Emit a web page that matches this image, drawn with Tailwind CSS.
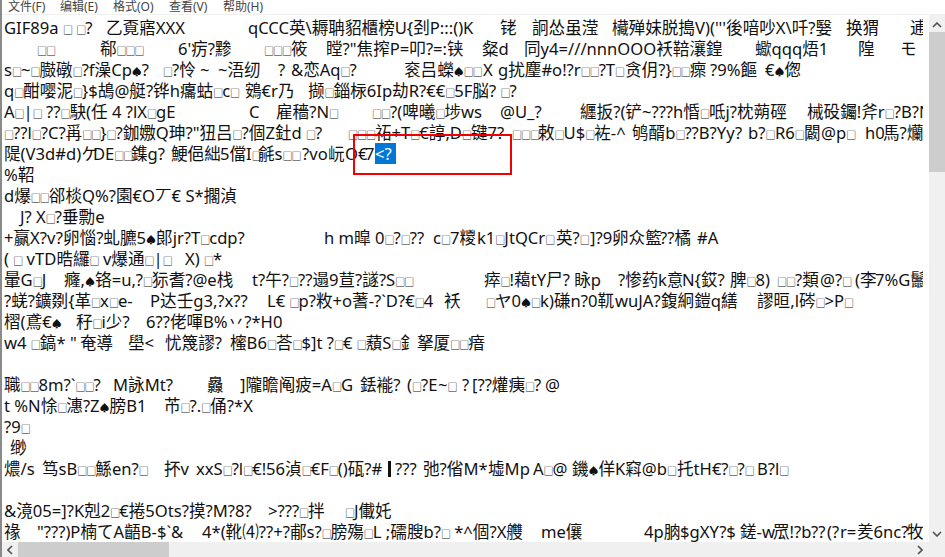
<!DOCTYPE html>
<html lang="zh-CN">
<head>
    <meta charset="UTF-8">
    <title>记事本</title>
    <script src="https://cdn.jsdelivr.net/npm/@tailwindcss/browser@4"></script>
</head>
<body class="w-[945px] h-[557px] overflow-hidden bg-white text-[#111] font-['Noto_Sans','Noto_Sans_CJK_SC',sans-serif]">
    <div class="relative flex flex-col h-full border-l-2 border-[#8a8a8a]">
        <!-- 菜单栏 -->
        <div class="flex h-[15px] overflow-hidden text-[12px] leading-[13px] text-[#444] border-b border-[#f0f0f0] shrink-0">
            <span class="w-[52px] pl-[6px] shrink-0">文件(F)</span>
            <span class="w-[53px] pl-[6px] shrink-0">编辑(E)</span>
            <span class="w-[56px] pl-[6px] shrink-0">格式(O)</span>
            <span class="w-[54px] pl-[6px] shrink-0">查看(V)</span>
            <span class="pl-[6px] shrink-0">帮助(H)</span>
        </div>

        <div class="flex flex-1 min-h-0">
            <!-- 文本区 -->
            <div id="text" class="relative flex flex-col w-[921px] pt-[2px] overflow-hidden text-[16.6px] leading-[21px] whitespace-pre pl-[2px]">
                <div class="flex h-[21px]"><span class="w-[102px] shrink-0">GIF89a ▫ ▫?</span><span class="w-[142px] shrink-0">乙覔寤XXX</span><span class="w-[252px] shrink-0">qCCC英\耨聃貂櫃榜U{刭P:::()K</span><span class="w-[32px] shrink-0">铑</span><span class="w-[80px] shrink-0">詗怂虽滢</span><span class="w-[234px] shrink-0">欌殚妹脱搗V)('''後喑吵X\吀?嫛</span><span class="w-[64px] shrink-0">换猬</span><span>逋</span></div>
                <div class="flex h-[21px]"><span class="w-[33px] shrink-0"></span><span class="w-[63px] shrink-0">▫▫</span><span class="w-[78px] shrink-0">郗▫▫▫</span><span class="w-[86px] shrink-0">6'疠?黪</span><span class="w-[62px] shrink-0">▫▫▫筱</span><span class="w-[156px] shrink-0">瞠?"焦搾P=叩?=:铗</span><span class="w-[42px] shrink-0">粲d</span><span class="w-[231px] shrink-0">同y4=///nnnOOO袄鞛瀼鍠</span><span class="w-[103px] shrink-0">蠍qqq焐1</span><span class="w-[42px] shrink-0">隍</span><span class="w-[19px] shrink-0">モ</span><span class="text-[12px] text-[#c98a3a]">⋮</span></div>
                <div class="flex h-[21px]"><span class="w-[159px] shrink-0">s▫~▫臌礅▫?f澡Cp<span class="text-[10px]">♠</span>?</span><span class="w-[55px] shrink-0">▫?怜 ~</span><span class="w-[60px] shrink-0">~浯纫</span><span class="w-[13px] shrink-0">?</span><span class="w-[113px] shrink-0">&amp;恋Aq▫?</span><span class="w-[79px] shrink-0">衮吕蠑<span class="text-[10px]">♠</span>▫▫</span><span class="w-[15px] shrink-0">X</span><span class="w-[127px] shrink-0">g扰麈#o!?r▫▫?T▫</span><span class="w-[85px] shrink-0">贪仴?}▫▫瘝</span><span class="w-[55px] shrink-0">?9%饇</span><span>€<span class="text-[10px]">♠</span>偬</span></div>
                <div class="flex h-[21px]"><span class="w-[241px] shrink-0">q▫酣嘤泥▫}$鴣@艇?铧h癟蛄▫c▫</span><span class="w-[63px] shrink-0">鴳€r乃</span><span>撷▫錙柡6Ip劫R?€€▫5F脳? ▫?</span></div>
                <div class="flex h-[21px]"><span class="w-[245px] shrink-0">A▫|▫ ??▫駃(任 4 ?lX▫gE</span><span class="w-[27px] shrink-0">C</span><span class="w-[96px] shrink-0">雇穡?N▫</span><span class="w-[128px] shrink-0">▫▫?(啤曦▫埗ws</span><span class="w-[80px] shrink-0">@U_?</span><span class="w-[227px] shrink-0">纒扳?(铲~???h惛▫呧j?枕蒴硜</span><span>械砓钃!斧r▫?B?N</span></div>
                <div class="flex h-[21px]"><span class="w-[344px] shrink-0">▫??l▫?C?爯▫▫}▫?鉫嫐Q珅?"狃吕▫?個Z釷d ▫?</span><span class="w-[164px] shrink-0">▫▫▫祏+T▫€諄,D▫键7?</span><span class="w-[26px] shrink-0">▫▫▫</span><span class="w-[94px] shrink-0">敕▫U$▫袏-^</span><span class="w-[116px] shrink-0">鸲醑b▫??B?Yy?</span><span class="w-[27px] shrink-0">b?▫</span><span class="w-[29px] shrink-0">R6▫</span><span class="w-[17px] shrink-0">闙</span><span class="w-[44px] shrink-0">@p▫</span><span class="w-[18px] shrink-0">h0</span><span>馬?爤A</span></div>
                <div class="flex h-[21px]"><span class="w-[89px] shrink-0">隄(V3d#d)ケ</span><span class="w-[38px] shrink-0">DE▫▫</span><span class="w-[40px] shrink-0">鏶g?</span><span class="w-[49px] shrink-0">鯁俋絀</span><span class="w-[38px] shrink-0">5儅I▫</span><span class="w-[44px] shrink-0">毹s▫▫</span><span class="w-[26px] shrink-0">?vo</span><span class="w-[17px] shrink-0">岏</span><span class="w-[20px] shrink-0">O€</span><span class="w-[10px] shrink-0">7</span><span class="w-[21px] shrink-0 bg-[#0078d7] text-white">&lt;?</span></div>
                <div class="flex h-[21px]"><span>%鞀</span></div>
                <div class="flex h-[21px]"><span>d爆▫▫郤棪Q%?園€O丆€ S*擱湞</span></div>
                <div class="flex h-[21px]"><span class="w-[16px] shrink-0"></span><span>J? X▫?垂勡e</span></div>
                <div class="flex h-[21px]"><span class="w-[320px] shrink-0">+赢X?v?卵惱?虬臕5<span class="text-[10px]">♠</span>郞jr?T▫cdp?</span><span class="w-[109px] shrink-0">h m暭 0▫?▫??</span><span class="w-[44px] shrink-0">c▫7糭</span><span class="w-[79px] shrink-0">k1▫JtQCr▫</span><span class="w-[34px] shrink-0">英?▫</span><span class="w-[22px] shrink-0">]?9</span><span class="w-[48px] shrink-0">卵众籃</span><span class="w-[37px] shrink-0">??橘</span><span>#A</span></div>
                <div class="flex h-[21px]"><span class="w-[181px] shrink-0">( ▫ vTD晧纙▫ v爆通▫|▫</span><span>X) ▫*</span></div>
                <div class="flex h-[21px]"><span class="w-[60px] shrink-0">暈G▫J</span><span class="w-[188px] shrink-0">癃,<span class="text-[10px]">♠</span>铬=u,?▫狋耆?@e栈</span><span class="w-[232px] shrink-0">t?午?▫??遢9荁?譢?S▫▫</span><span class="w-[134px] shrink-0">瘁▫!藒tY尸? 眿p</span><span class="w-[40px] shrink-0">?惨药</span><span class="w-[24px] shrink-0">k意</span><span class="w-[48px] shrink-0">N{銰?</span><span class="w-[47px] shrink-0">脾▫8)</span><span class="w-[43px] shrink-0">▫▫?類</span><span class="w-[35px] shrink-0">@?▫</span><span class="w-[20px] shrink-0">(李</span><span class="w-[35px] shrink-0">7%G</span><span>鬛</span></div>
                <div class="flex h-[21px]"><span class="w-[146px] shrink-0">?蜣?鑛剟{革▫x▫e-</span><span class="w-[117px] shrink-0">P达壬g3,?x??</span><span class="w-[177px] shrink-0">L€ ▫p?敉+o蓍-?`D?€▫4</span><span class="w-[42px] shrink-0">袄</span><span class="w-[129px] shrink-0">▫ヤ0<span class="text-[10px]">♠</span>▫k)磏n?0靰</span><span class="w-[46px] shrink-0">wuJA?</span><span class="w-[96px] shrink-0">鍑絅鎧q繕</span><span>謬晅,l硶▫&gt;P▫</span></div>
                <div class="flex h-[21px]"><span class="w-[72px] shrink-0">槢(鳶€<span class="text-[10px]">♠</span></span><span class="w-[70px] shrink-0">秄▫i少?</span><span>6??佬喗B%丷?*H0</span></div>
                <div class="flex h-[21px]"><span class="w-[76px] shrink-0">w4 ▫鎬* "</span><span class="w-[48px] shrink-0">奄導</span><span class="w-[37px] shrink-0">壆&lt;</span><span class="w-[65px] shrink-0">忧篾謬?</span><span class="w-[187px] shrink-0">櫁B6▫荅▫$]t ?▫€ ▫蘈S▫釒</span><span>拏厦▫▫瘖</span></div>
                <div class="h-[21px] shrink-0"></div>
                <div class="flex h-[21px]"><span class="w-[109px] shrink-0">職▫▫8m?`▫▫?</span><span class="w-[94px] shrink-0">M詠Mt?</span><span class="w-[33px] shrink-0">灥</span><span class="w-[120px] shrink-0">]隴瞻阄疲=A▫G</span><span class="w-[47px] shrink-0">銩褦?</span><span class="w-[14px] shrink-0">(▫</span><span class="w-[17px] shrink-0">?E</span><span class="w-[24px] shrink-0">~▫</span><span class="w-[10px] shrink-0">?</span><span class="w-[73px] shrink-0">[??爟痍▫?</span><span>@</span></div>
                <div class="flex h-[21px]"><span class="w-[160px] shrink-0">t %N悇▫潓?Z<span class="text-[10px]">♠</span>膀B1</span><span>芇▫?.▫俑?*X</span></div>
                <div class="flex h-[21px]"><span>?9▫</span></div>
                <div class="flex h-[21px]"><span class="w-[6px] shrink-0"></span><span>缈</span></div>
                <div class="flex h-[21px]"><span class="w-[38px] shrink-0">燶/s</span><span class="w-[122px] shrink-0">笃sB▫▫鯀en?▫</span><span class="w-[32px] shrink-0">抔v</span><span class="w-[192px] shrink-0">xxS▫?l▫€!56湞▫€F▫()砙?#</span><span class="w-[7px] shrink-0 overflow-hidden">├</span><span class="w-[28px] shrink-0">???</span><span class="w-[65px] shrink-0">弛?偗M*</span><span class="w-[45px] shrink-0">墟Mp</span><span class="w-[39px] shrink-0">A▫@</span><span class="w-[43px] shrink-0">鐖<span class="text-[10px]">♠</span>佯</span><span class="w-[62px] shrink-0">K窲@b▫</span><span class="w-[80px] shrink-0">托tH€?▫?▫</span><span>B?l▫</span></div>
                <div class="h-[21px] shrink-0"></div>
                <div class="flex h-[21px]"><span class="w-[264px] shrink-0">&amp;滰05=]?K剋2▫€捲5Ots?摸?M?8?</span><span class="w-[77px] shrink-0">&gt;???▫拌</span><span>▫J儎奼</span></div>
                <div class="flex h-[21px]"><span class="w-[33px] shrink-0">禒</span><span class="w-[165px] shrink-0">"???)P楠てA齬B-$`&amp;</span><span class="w-[339px] shrink-0">4*(靴⑷??+?郙s?▫膀殤▫L ;礝膄b?▫ *^個?X艭</span><span class="w-[103px] shrink-0">me儴</span><span class="w-[36px] shrink-0">4p朒</span><span class="w-[60px] shrink-0">$gXY?$</span><span class="w-[33px] shrink-0">鎈-w</span><span class="w-[38px] shrink-0">罛!?b</span><span class="w-[16px] shrink-0">??</span><span class="w-[13px] shrink-0">(?</span><span class="w-[17px] shrink-0">r=</span><span class="w-[50px] shrink-0">羑6nc?</span><span>牧</span></div>
            </div>

            <!-- 垂直滚动条 -->
            <div class="flex flex-col w-[16px] ml-auto bg-[#f0f0f0] shrink-0">
                <div class="flex items-center justify-center h-[17px] pt-[3px]">
                    <svg width="10" height="6" viewBox="0 0 10 6" fill="none" stroke="#505050" stroke-width="1.6"><path d="M1 5l4-4 4 4"/></svg>
                </div>
                <div class="h-[140px] bg-[#cdcdcd]"></div>
                <div class="flex-1"></div>
                <div class="flex items-center justify-center h-[17px]">
                    <svg width="10" height="6" viewBox="0 0 10 6" fill="none" stroke="#505050" stroke-width="1.6"><path d="M1 1l4 4 4-4"/></svg>
                </div>
            </div>
        </div>

        <!-- 水平滚动条 -->
        <div class="flex items-center h-[15px] bg-[#f0f0f0] shrink-0">
            <div class="flex items-center justify-center w-[16px] h-full">
                <svg width="6" height="10" viewBox="0 0 6 10" fill="none" stroke="#505050" stroke-width="1.6"><path d="M5 1L1 5l4 4"/></svg>
            </div>
            <div class="w-[151px] h-full bg-[#cdcdcd]"></div>
            <div class="flex-1"></div>
            <div class="flex items-center justify-center w-[33px] h-full pr-[17px]">
                <svg width="6" height="10" viewBox="0 0 6 10" fill="none" stroke="#505050" stroke-width="1.6"><path d="M1 1l4 4-4 4"/></svg>
            </div>
        </div>

        <!-- 标注框和光标 -->
        <div class="absolute left-[351px] top-[134px] w-[159px] h-[41px] border-2 border-[#f00000]"></div>
        <div class="absolute left-[386px] top-[461px] w-[2.5px] h-[16px] bg-[#111]"></div>
    </div>
    <script>
        // 小方块字符统一换成窄的 span
        const walker = document.createTreeWalker(document.getElementById('text'), NodeFilter.SHOW_TEXT);
        const nodes = [];
        while (walker.nextNode()) nodes.push(walker.currentNode);
        nodes.forEach(function(node) {
            if (!node.textContent.includes('▫')) return;
            const frag = document.createDocumentFragment();
            node.textContent.split('▫').forEach(function(part, i) {
                if (i > 0) {
                    const box = document.createElement('span');
                    box.className = 'inline-block w-[9px] text-center text-[10px] leading-none';
                    box.textContent = '□';
                    frag.appendChild(box);
                }
                frag.appendChild(document.createTextNode(part));
            });
            node.replaceWith(frag);
        });
    </script>
</body>
</html>
